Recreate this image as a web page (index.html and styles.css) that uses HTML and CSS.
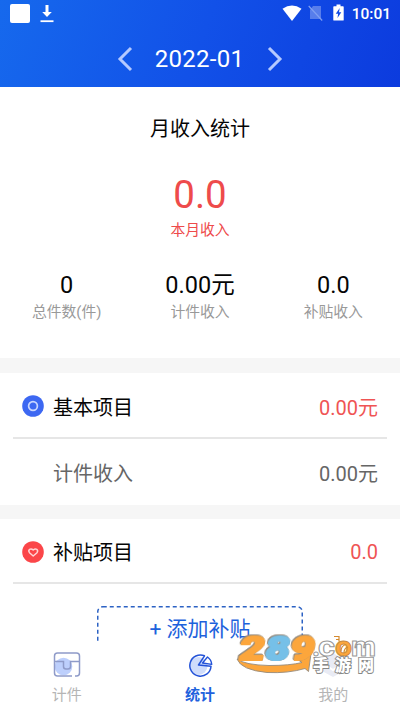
FILE: index.html
```html
<!DOCTYPE html>
<html lang="zh-CN">
<head>
<meta charset="utf-8">
<title>月收入统计</title>
<link rel="stylesheet" href="styles.css">
</head>
<body>
<div class="app">
  <header class="header">
    <div class="status">
      <span class="status-app"></span>
      <svg class="status-download" width="14" height="19" viewBox="0 0 14 19"><path d="M5.500 1h3v7h3.300L7 13 2.200 8h3.300z" fill="#fff"/><path d="M.5 17.200h13" stroke="#fff" stroke-width="1.800"/></svg>
      <svg class="status-wifi" width="20" height="17" viewBox="0 0 20 17"><path d="M.5 3.800Q10-2.800 19.500 3.800L10 16z" fill="#fff"/></svg>
      <svg class="status-sim" width="15" height="16" viewBox="0 0 15 16"><path d="M5 1h8v13H2V5z" fill="#fff" opacity=".3"/><path d="M.7 1 14.200 15.500" stroke="#7f9ff2" stroke-width="1.200"/></svg>
      <svg class="status-battery" width="11" height="17" viewBox="0 0 11 17"><path d="M3.500.5h4v1.700H10q.7 0 .7.700v13q0 .7-.7.700H1q-.7 0-.7-.7v-13q0-.7.7-.7h2.500z" fill="#fff"/><path d="M6.700 4 2.800 9.700h2.300L4.500 14l3.800-5.700H6z" fill="#114be4"/></svg>
      <span class="status-time">10:01</span>
    </div>
    <div class="month">
      <svg width="16" height="26" viewBox="0 0 16 26"><path d="M14 2 3 13 14 24" class="chevron"/></svg>
      <h1>2022-01</h1>
      <svg width="16" height="26" viewBox="0 0 16 26"><path d="M2 2 13 13 2 24" class="chevron"/></svg>
    </div>
  </header>
  <main class="content">
    <section class="summary">
      <h2>月收入统计</h2>
      <div class="total">0.0</div>
      <div class="total-label">本月收入</div>
      <div class="stats">
        <div><b>0</b><span>总件数(件)</span></div>
        <div><b>0.00元</b><span>计件收入</span></div>
        <div><b>0.0</b><span>补贴收入</span></div>
      </div>
    </section>
    <section class="group">
      <div class="row row-head">
        <svg class="badge" width="22" height="22" viewBox="0 0 22 22"><circle cx="11" cy="11" r="10.800" fill="#3d68f2"/><circle cx="11" cy="11" r="4.400" fill="none" stroke="#cad7ff" stroke-width="1.700"/></svg>
        <span class="name">基本项目</span><span class="amount">0.00元</span>
      </div>
      <div class="row row-item"><span class="name">计件收入</span><span class="amount">0.00元</span></div>
    </section>
    <section class="group allowance">
      <div class="row row-head">
        <svg class="badge" width="22" height="22" viewBox="0 0 22 22"><circle cx="11" cy="11" r="10.800" fill="#fb4649"/><path d="M11.200 15 7.500 11.700Q6 9.500 7.600 8.300 9.500 7.300 11.200 9 13 7.300 14.800 8.300 16.400 9.500 15 11.700z" fill="none" stroke="#ffd4d4" stroke-width="1.500" stroke-linejoin="round"/></svg>
        <span class="name">补贴项目</span><span class="amount">0.0</span>
      </div>
      <div class="add"><svg width="206" height="48" viewBox="0 0 206 48"><rect x=".75" y=".75" width="204.500" height="60" rx="5"/></svg><span>+ 添加补贴</span></div>
    </section>
  </main>
  <nav class="tabs">
    <div class="tab">
      <svg width="28" height="26" viewBox="0 0 28 26"><circle cx="10.500" cy="14.500" r="8.800" fill="#bdcffc"/><path d="M19 24H4.500Q1.500 24 1.500 21V4Q1.500 1 4.500 1h19q3 0 3 3v17q0 3-3 3H22M1.500 9.500h9v5q0 2.500 2.500 2.500h2q2.500 0 2.500-2.500v-5h9" fill="none" stroke="#8f9bc9" stroke-width="1.500"/></svg>
      <span>计件</span>
    </div>
    <div class="tab active">
      <svg width="28" height="26" viewBox="0 0 28 26"><circle cx="12.500" cy="14" r="9" fill="#cfdcfb"/><path d="M18.500 3.800A10.600 10.600 0 1 0 25 14.200L12.500 13z" fill="none" stroke="#2453d8" stroke-width="1.500" stroke-linejoin="round"/><path d="M21.500 5 16.500 11 25.700 12.400Q25.500 8 21.500 5z" fill="#fff" stroke="#2453d8" stroke-width="1.400" stroke-linejoin="round"/></svg>
      <span>统计</span>
    </div>
    <div class="tab">
      <svg width="28" height="26" viewBox="0 0 28 26"><path d="m14 1 11 6v12l-11 6-11-6V7z" fill="#e9ebf4"/><path d="m8 14 6 4 6-4" fill="none" stroke="#fff" stroke-width="2"/></svg>
      <span>我的</span>
    </div>
  </nav>
  <svg class="watermark" width="146" height="40" viewBox="0 0 146 40">
    <path d="M1 24Q9 30 33 30.500 54 30.500 66 27.500L63 25.500 75 18.500 72.500 36.500 69 33.500Q52 38.500 31 37.500 5 35 1 24z" fill="#fca63c" stroke="#958b7e" stroke-width=".9"/>
    <g class="mark-number" transform="translate(2 25) skewX(-10)"><text x="0" textLength="25" lengthAdjust="spacingAndGlyphs" class="warm">2</text><text x="26" textLength="24" lengthAdjust="spacingAndGlyphs" class="cool">8</text><text x="51" textLength="24" lengthAdjust="spacingAndGlyphs" class="warm">9</text></g>
    <g class="mark-domain"><text x="76" y="21">.</text><text x="82" y="21" textLength="17" lengthAdjust="spacingAndGlyphs">c</text><text x="99" y="21" class="mark-o" textLength="17" lengthAdjust="spacingAndGlyphs">o</text><text x="115" y="21" textLength="25" lengthAdjust="spacingAndGlyphs">m</text></g>
    <path d="M98 1.500h5v3h-3M103 4.500v2M110 9.500q-5 1-5 7M112 12q-4 1-4 6" fill="none" stroke="#d48a30" stroke-width="1.200"/>
    <g class="mark-site"><text x="77" y="35.500">手</text><text x="99" y="35.500">游</text><text x="122" y="35.500">网</text></g>
  </svg>
</div>
</body>
</html>
```
FILE: styles.css
```css
* { box-sizing: border-box; }
body { margin: 0; font-family: Roboto, "Noto Sans CJK SC", sans-serif; color: #050505; background: #fff; }
h1, h2 { margin: 0; font-weight: 400; }
svg { display: block; flex: none; }
.app { position: relative; width: 400px; height: 711px; overflow: hidden; display: flex; flex-direction: column; }
.header { flex: none; height: 87px; background: linear-gradient(110deg, #1669ed, #1251e8 50%, #0c3bde); color: #fff; }
.status { height: 30px; padding: 4px 9px 0 10px; display: flex; align-items: flex-start; }
.status-app { width: 20px; height: 19px; border-radius: 2px; background: #fff; }
.status-download { margin-left: 10px; }
.status-wifi { margin-left: 228px; margin-top: 1px; }
.status-sim { margin-left: 6px; margin-top: 1px; }
.status-battery { margin-left: 10px; }
.status-time { margin-left: auto; font-size: 15.5px; font-weight: 500; line-height: 20px; }
.month { height: 57px; display: flex; justify-content: center; align-items: center; gap: 21px; padding-right: 1px; }
.month h1 { font-size: 24px; line-height: 30px; letter-spacing: .3px; width: 92px; text-align: center; white-space: nowrap; }
.chevron { fill: none; stroke: #b5c9ff; stroke-width: 3; }
.content { flex: 1; min-height: 0; overflow: hidden; }
.summary { height: 271px; padding-top: 27px; text-align: center; }
.summary h2 { font-size: 20px; line-height: 30px; }
.total { margin-top: 28px; font-size: 38.5px; line-height: 46px; color: #ee4b4b; }
.total-label { margin-top: 1px; font-size: 14.8px; line-height: 22px; color: #ee4b4b; }
.stats { margin-top: 28px; display: grid; grid-template-columns: repeat(3, 1fr); }
.stats b { display: block; font-weight: 400; font-size: 23.5px; line-height: 32px; }
.stats span { display: block; font-size: 14.8px; line-height: 22px; color: #999; }
.group { border-top: 15px solid #f6f6f6; }
.allowance { border-top-width: 14px; }
.row { display: flex; align-items: center; padding: 0 9px; margin: 0 13px; font-size: 20px; }
.row-head { height: 66px; padding-top: 2px; border-bottom: 2px solid #e6e6e6; }
.allowance .row-head { height: 65px; }
.badge { margin-right: 9px; }
.amount { margin-left: auto; }
.row-head .amount { color: #ef5454; }
.row-item { height: 66px; padding-left: 40px; color: #666; }
.add { position: relative; width: 206px; margin: 22px auto 0; padding-top: 8px; text-align: center; color: #1d62dc; font-size: 21px; line-height: 30px; }
.add svg { position: absolute; left: 0; top: 0; }
.add rect { fill: none; stroke: #2c62c4; stroke-width: 1.5; stroke-dasharray: 4 3; }
.tabs { flex: none; height: 69px; display: grid; grid-template-columns: repeat(3, 1fr); background: #fff; }
.tab { padding-top: 10px; display: flex; flex-direction: column; align-items: center; color: #b5b5b5; font-size: 15px; }
.tab span { margin-top: 5px; line-height: 24px; }
.active { color: #1f62dd; font-weight: 700; }
.watermark { position: absolute; left: 236px; top: 635px; overflow: visible; }
.mark-number { font: 900 32px Roboto, sans-serif; stroke-width: 2.2; stroke-linejoin: round; filter: drop-shadow(.6px .6px 0 #958b7e) drop-shadow(-.6px -.6px 0 #958b7e); }
.warm { fill: #fca63c; stroke: #fca63c; }
.cool { fill: #76c0e8; stroke: #76c0e8; }
.mark-domain { font: 700 28px Roboto, sans-serif; fill: #fff; stroke: #999; stroke-width: 1; }
.mark-domain .mark-o { fill: #fca63c; stroke: #c98b40; }
.mark-site { font: 900 16px "Noto Sans CJK SC", sans-serif; fill: #fff; stroke: #888; stroke-width: 1.8; paint-order: stroke; }
```
